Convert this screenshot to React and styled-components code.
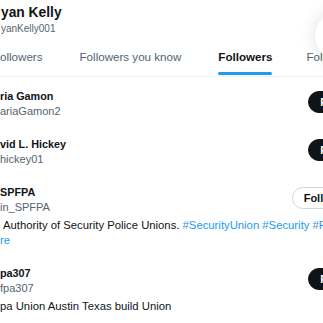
import React from 'react';
import styled, {createGlobalStyle} from 'styled-components';

const GlobalStyle = createGlobalStyle`
    html, body {
        margin: 0;
        padding: 0;
        background: #ffffff;
    }
    body {
        font-family: "Liberation Sans", Arial, sans-serif;
        color: #0f1419;
        overflow: hidden;
    }
`;

const Viewport = styled.div`
    position: relative;
    width: 323px;
    height: 323px;
    overflow: hidden;
    background: #fff;
`;

const Column = styled.div`
    width: 367px;
`;

const Header = styled.header`
    height: 39px;
    padding: 5px 0 0 1px;
    box-sizing: border-box;
`;

const HeaderName = styled.div`
    font-size: 13.8px;
    font-weight: bold;
    line-height: 16px;
    white-space: nowrap;
`;

const HeaderHandle = styled.div`
    font-size: 10px;
    line-height: 15px;
    color: #536471;
    white-space: nowrap;
`;

const TabBar = styled.nav`
    display: flex;
    gap: 37px;
    height: 37px;
    border-bottom: 1px solid #eff3f4;
`;

const Tab = styled.div`
    position: relative;
    display: flex;
    align-items: center;
    padding-bottom: 3px;
    margin-left: ${props => props.pull ? -props.pull : 0}px;
    font-size: 11.6px;
    font-weight: ${props => props.active ? 'bold' : 'normal'};
    color: ${props => props.active ? '#0f1419' : '#536471'};
    white-space: nowrap;
    &::after {
        content: '';
        display: ${props => props.active ? 'block' : 'none'};
        position: absolute;
        left: 0;
        right: 0;
        bottom: 1px;
        height: 3px;
        border-radius: 2px;
        background: #1d9bf0;
    }
`;

const ScrollShadow = styled.div`
    position: absolute;
    top: 12px;
    right: -40px;
    width: 48px;
    height: 48px;
    border-radius: 50%;
    background: #fff;
    box-shadow: 0 0 18px rgba(0, 0, 0, 0.13);
`;

const List = styled.div`
    display: flex;
    flex-direction: column;
`;

const Row = styled.div`
    display: flex;
    justify-content: space-between;
    align-items: flex-start;
    padding: 12px 0 6px;
`;

const Info = styled.div`
    display: flex;
    flex-direction: column;
    min-width: 0;
`;

const Name = styled.div`
    font-size: 10.8px;
    font-weight: bold;
    line-height: 15px;
    white-space: nowrap;
`;

const Handle = styled.div`
    font-size: 11px;
    line-height: 15px;
    color: #536471;
    white-space: nowrap;
`;

const Bio = styled.div`
    margin-top: 3px;
    display: flex;
    flex-direction: column;
`;

const BioLine = styled.div`
    font-size: 11.3px;
    line-height: 15px;
    white-space: nowrap;
    padding-left: ${props => props.indent || 0}px;
`;

const Tag = styled.span`
    color: #1d9bf0;
`;

const FollowButton = styled.button`
    flex-shrink: 0;
    margin-top: 2px;
    height: 22px;
    padding: 0 11px;
    border-radius: 11px;
    border: 1px solid ${props => props.outlined ? '#cfd9de' : '#0f1419'};
    background: ${props => props.outlined ? '#ffffff' : '#0f1419'};
    color: ${props => props.outlined ? '#0f1419' : '#ffffff'};
    font-family: inherit;
    font-size: 11px;
    font-weight: bold;
    line-height: 20px;
    white-space: nowrap;
`;

const users = [
    {name: 'ria Gamon', handle: 'ariaGamon2', button: 'Follow'},
    {name: 'vid L. Hickey', handle: 'hickey01', button: 'Follow'},
    {
        name: 'SPFPA',
        handle: 'in_SPFPA',
        button: 'Following',
        outlined: true,
        bio: [
            <>Authority of Security Police Unions. <Tag>#SecurityUnion #Security #Police</Tag></>,
            <Tag>re</Tag>,
        ],
        indent: 3,
    },
    {
        name: 'pa307',
        handle: 'fpa307',
        button: 'Follow',
        bio: ['pa Union Austin Texas build Union'],
    },
];

export default function App() {
    return (
        <Viewport>
            <GlobalStyle/>
            <Column>
                <Header>
                    <HeaderName>yan Kelly</HeaderName>
                    <HeaderHandle>yanKelly001</HeaderHandle>
                </Header>
                <TabBar>
                    <Tab>ollowers</Tab>
                    <Tab>Followers you know</Tab>
                    <Tab active>Followers</Tab>
                    <Tab pull={3}>Following</Tab>
                </TabBar>
                <List>
                    {users.map(u => (
                        <Row key={u.handle}>
                            <Info>
                                <Name>{u.name}</Name>
                                <Handle>{u.handle}</Handle>
                                {u.bio && (
                                    <Bio>
                                        {u.bio.map((line, i) => (
                                            <BioLine key={i} indent={i === 0 ? u.indent : 0}>{line}</BioLine>
                                        ))}
                                    </Bio>
                                )}
                            </Info>
                            <FollowButton outlined={u.outlined}>{u.button}</FollowButton>
                        </Row>
                    ))}
                </List>
            </Column>
            <ScrollShadow/>
        </Viewport>
    );
}
